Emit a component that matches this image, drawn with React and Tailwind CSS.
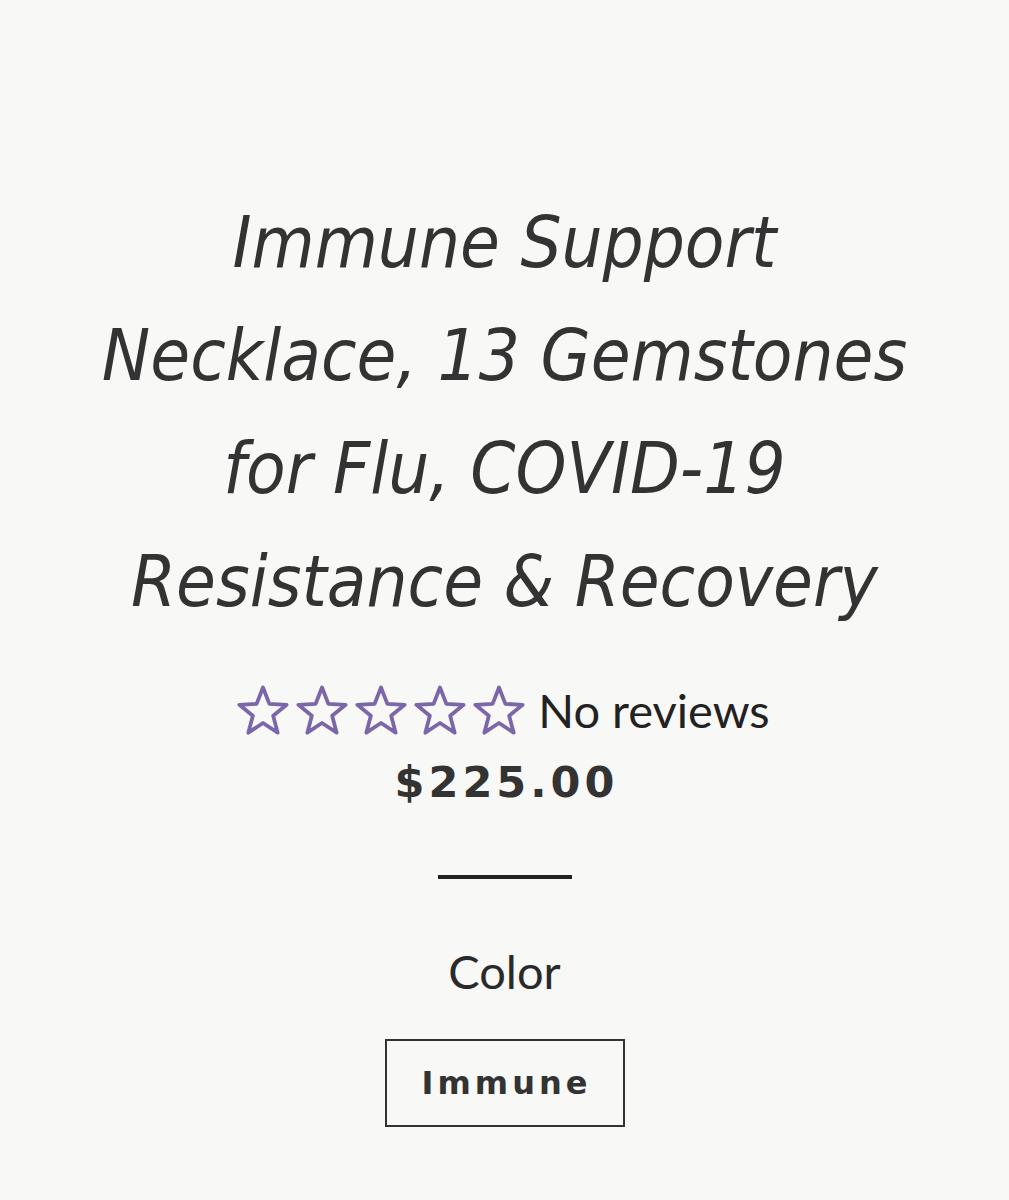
import React from "react";

function Star() {
  return (
    <svg width="52" height="50" viewBox="1 0.5 22 21" className="shrink-0">
      <polygon
        points="12,1.5 14.7,8.4 22,8.8 16.3,13.4 18.2,20.6 12,16.5 5.8,20.6 7.7,13.4 2,8.8 9.3,8.4"
        fill="none"
        stroke="#7b66aa"
        strokeWidth="1.6"
        strokeLinejoin="round"
      />
    </svg>
  );
}

export default function App() {
  return (
    <div className="min-h-[1200px] w-full bg-[#f8f8f6] text-[#333] flex flex-col items-center">
      <h1
        className="mt-[186px] text-center text-[#333] text-[72px] leading-[113px] italic font-normal"
        style={{ fontFamily: '"DejaVu Sans Condensed", "DejaVu Sans", sans-serif', fontStretch: "condensed" }}
      >
        Immune Support
        <br />
        Necklace, 13 Gemstones
        <br />
        for Flu, COVID-19
        <br />
        Resistance &amp; Recovery
      </h1>
      <div className="mt-[46px] flex items-center gap-[13px] -ml-[2px]">
        <div className="flex items-center gap-[7px]">
          <Star />
          <Star />
          <Star />
          <Star />
          <Star />
        </div>
        <span className="text-[47px] leading-[52px] text-[#222] font-['Lato',sans-serif] font-normal">
          No reviews
        </span>
      </div>
      <div
        className="mt-[18px] text-[43px] leading-[56px] font-bold tracking-[4px] text-[#333] pl-[4px]"
        style={{ fontFamily: '"DejaVu Sans", sans-serif' }}
      >
        $225.00
      </div>
      <div className="mt-[65px] w-[134px] h-[4px] bg-[#222]" />
      <div className="mt-[64px] text-[47px] leading-[56px] text-[#2a2a2a] font-['Lato',sans-serif] font-normal">
        Color
      </div>
      <div className="mt-[40px] w-[240px] h-[88px] border-2 border-[#333] flex items-center justify-center">
        <span
          className="text-[32px] font-bold tracking-[4px] text-[#333] pl-[4px]"
          style={{ fontFamily: '"DejaVu Sans", sans-serif' }}
        >
          Immune
        </span>
      </div>
    </div>
  );
}
